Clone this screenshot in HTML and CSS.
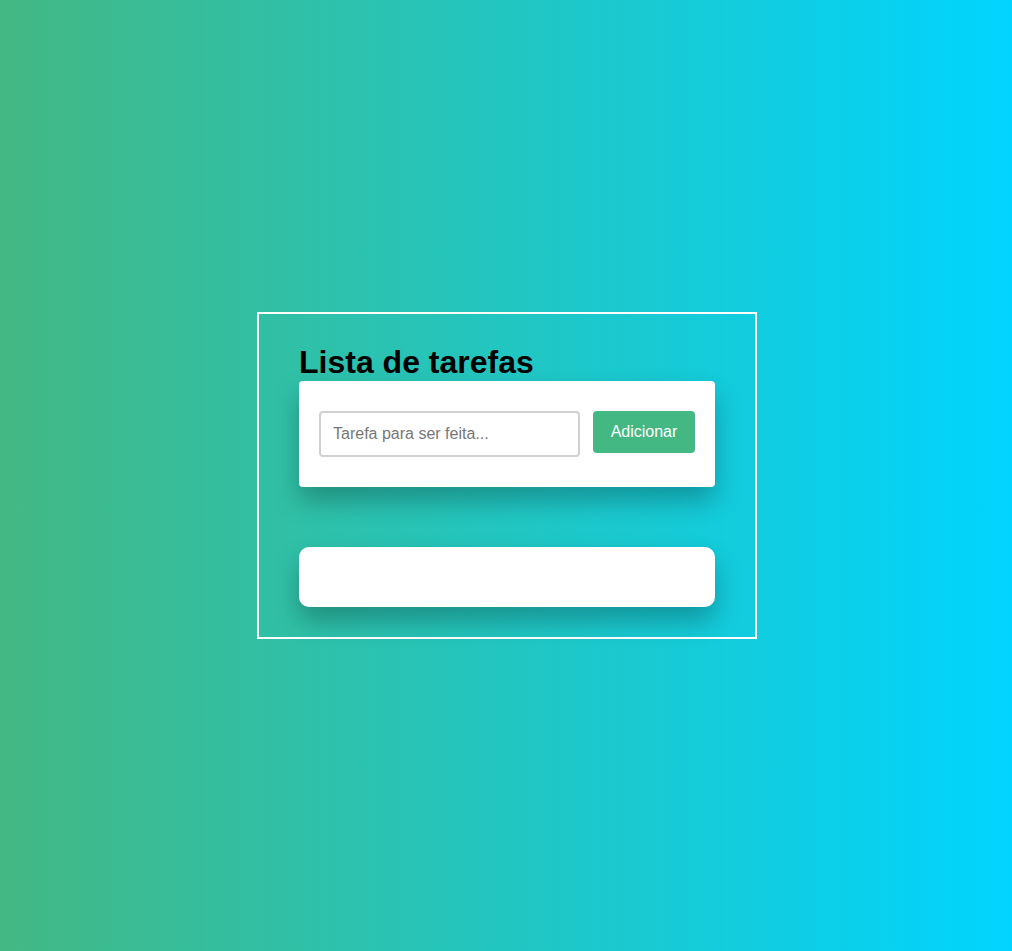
FILE: index.html
```html
<!DOCTYPE html>
<html lang="pt">
<head>
<meta charset="utf-8">
<title>Lista de tarefas</title>
<link rel="stylesheet" href="styles.css">
</head>
<body>
  <main class="container">
    <h1 class="title">Lista de tarefas</h1>
    <form class="card form-card" onsubmit="return false">
      <input class="task-input" type="text" placeholder="Tarefa para ser feita...">
      <button class="add-btn" type="submit">Adicionar</button>
    </form>
    <ul class="card list-card"></ul>
  </main>
</body>
</html>
```

FILE: styles.css
```css
* { box-sizing: border-box; }

html, body { margin: 0; padding: 0; }

body {
  min-height: 100vh;
  padding: 0 0 0 2px;
  display: flex;
  align-items: center;
  justify-content: center;
  background: linear-gradient(to right, #43b883, #00d4ff);
  font-family: "Liberation Sans", Arial, sans-serif;
}

.container {
  width: 500px;
  border: 2px solid #ffffff;
  padding: 30px 40px;
  display: flex;
  flex-direction: column;
}

.title {
  margin: 0;
  font-size: 32px;
  font-weight: bold;
  color: #000;
  line-height: 37px;
}

.card {
  background: #ffffff;
  box-shadow: 0 14px 26px rgba(0, 0, 0, 0.26);
}

.form-card {
  margin: 0;
  height: 106px;
  padding: 30px 20px;
  border-radius: 4px;
  display: flex;
  align-items: flex-start;
  gap: 13px;
}

.task-input {
  width: 261px;
  height: 46px;
  border: 2px solid #d0d0d0;
  border-radius: 4px;
  padding: 0 12px;
  font-family: "Liberation Sans", Arial, sans-serif;
  font-size: 16px;
  color: #333;
  outline: none;
}

.task-input::placeholder { color: #777; }

.add-btn {
  width: 102px;
  height: 42px;
  border: none;
  border-radius: 4px;
  background: #43b883;
  color: #ffffff;
  font-family: "Liberation Sans", Arial, sans-serif;
  font-size: 16px;
  padding: 0;
  cursor: pointer;
}

.list-card {
  list-style: none;
  margin: 60px 0 0;
  padding: 0;
  height: 60px;
  border-radius: 10px;
}
```
